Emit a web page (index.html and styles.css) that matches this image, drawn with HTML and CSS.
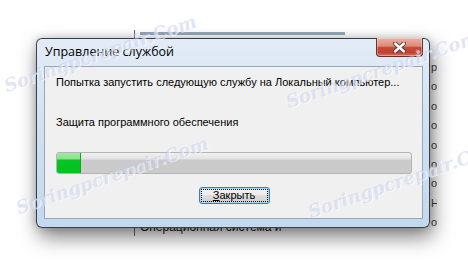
FILE: index.html
```html
<!DOCTYPE html>
<html lang="ru">
<head>
  <meta charset="UTF-8">
  <meta name="viewport" content="width=device-width, initial-scale=1.0">
  <title>Управление службой</title>
  <link rel="stylesheet" href="styles.css">
</head>
<body>
  <div class="desk">
    <!-- окно списка служб за диалогом -->
    <div class="app">
      <div class="app-main">
        <div class="app-head"></div>
        <div class="app-bottom">Операционная система и</div>
      </div>
      <div class="app-edge">
        <div>р</div>
        <div>о</div>
        <div>о</div>
        <div>о</div>
        <div>о</div>
        <div>о</div>
        <div>о</div>
        <div>Н</div>
        <div>о</div>
      </div>
    </div>

    <div class="dialog">
      <div class="titlebar">
        <span class="title">Управление службой</span>
        <button class="close" aria-label="Закрыть">
          <svg width="13" height="11" viewBox="0 0 13 11">
            <path d="M2 1.5 L11 9.5 M11 1.5 L2 9.5" stroke="#4b3431" stroke-width="4.2" stroke-linecap="round"/>
            <path d="M2 1.5 L11 9.5 M11 1.5 L2 9.5" stroke="#fff" stroke-width="2.4" stroke-linecap="round"/>
          </svg>
        </button>
      </div>
      <div class="client">
        <p class="msg">Попытка запустить следующую службу на Локальный компьютер...</p>
        <p class="service">Защита программного обеспечения</p>
        <div class="progress">
          <div class="progress-fill" style="width: 24px"></div>
        </div>
        <div class="actions">
          <button class="btn"><span class="btn-focus"><u>З</u>акрыть</span></button>
        </div>
      </div>
    </div>

    <!-- водяные знаки -->
    <span class="wm wm-1">Soringpcrepair.Com</span>
    <span class="wm wm-2">Soringpcrepair.Com</span>
    <span class="wm wm-3">Soringpcrepair.Com</span>
    <span class="wm wm-4">Soringpcrepair.Com</span>
  </div>
</body>
</html>
```

FILE: styles.css
```css
    body {
      margin: 0;
      padding: 0;
      background-color: #fff;
      font-family: "Liberation Sans", Arial, sans-serif;
      font-size: 11px;
      color: #000;
    }
    .desk {
      position: relative;
      width: 468px;
      height: 265px;
      overflow: hidden;
      background-color: #fff;
    }

    /* окно за диалогом */
    .app {
      position: absolute;
      left: 134px;
      top: 30px;
      width: 302px;
      height: 206px;
      display: flex;
      overflow: hidden;
      border-left: 1px solid #6a6a6a;
      background-color: #fff;
    }
    .app-main {
      flex: 1;
      display: flex;
      flex-direction: column;
      justify-content: space-between;
      padding-left: 5px;
    }
    .app-head {
      height: 3px;
      width: 205px;
      margin-top: 2px;
      background-color: #98a9bd;
    }
    .app-bottom {
      margin-bottom: 3px;
      font-size: 12px;
      line-height: 12px;
      color: #1a1a1a;
    }
    .app-edge {
      width: 6px;
      padding-top: 28px;
      font-size: 11px;
      color: #4a4040;
      line-height: 19.4px;
    }

    /* диалог */
    .dialog {
      position: absolute;
      left: 36px;
      top: 38px;
      width: 394px;
      height: 190px;
      box-sizing: border-box;
      display: flex;
      flex-direction: column;
      padding: 0 6px 8px 7px;
      border: 1px solid rgba(35, 45, 60, 0.9);
      border-radius: 6px;
      background: linear-gradient(to bottom, #e3ecf6 0%, #d3e2f2 40%, #c3d8ee 100%);
      box-shadow: 3px 9px 20px rgba(0, 0, 0, 0.5), 0 0 8px rgba(0, 0, 0, 0.18);
    }
    .titlebar {
      height: 27px;
      display: flex;
      align-items: center;
      justify-content: space-between;
    }
    .title {
      padding-left: 1px;
      padding-bottom: 2px;
      font-family: "Open Sans", sans-serif;
      font-size: 12.5px;
    }
    .close {
      align-self: flex-start;
      margin-top: -1px;
      width: 47px;
      height: 19px;
      padding: 0;
      display: flex;
      align-items: center;
      justify-content: center;
      border: 1px solid #6b2f26;
      border-top: none;
      border-radius: 0 0 4px 4px;
      background: linear-gradient(to bottom, #eab0a3 0%, #dd8b7a 45%, #c84c39 52%, #c0412f 80%, #d8735f 100%);
      box-shadow: inset 0 0 0 1px rgba(255, 255, 255, 0.35);
    }
    .client {
      flex: 1;
      border: 1px solid #97a6b8;
      background-color: #f0f0f0;
      padding: 8px 10px 0 11px;
    }
    .msg,
    .service {
      margin: 0;
      line-height: 15px;
      white-space: nowrap;
    }
    .service {
      margin-top: 25px;
    }
    .progress {
      margin-top: 22px;
      width: 356px;
      height: 22px;
      box-sizing: border-box;
      border: 1px solid #b4b4b4;
      border-radius: 3px;
      background: linear-gradient(to bottom, #f0f0f0 0%, #e3e3e3 30%, #cacaca 35%, #cbcbcb 100%);
      overflow: hidden;
    }
    .progress-fill {
      height: 100%;
      background: linear-gradient(to bottom, #a4e8a4 0%, #8ce08c 30%, #07c525 35%, #03c01e 100%);
      box-shadow: inset -1px 0 0 #08a81c;
    }
    .actions {
      display: flex;
      justify-content: center;
      margin-top: 13px;
    }
    .btn {
      width: 71px;
      height: 17px;
      padding: 1px;
      border: 1px solid #3c7fb1;
      border-radius: 3px;
      background: linear-gradient(to bottom, #f2f2f2 0%, #ebebeb 45%, #dddddd 50%, #cfcfcf 100%);
      box-shadow: inset 0 0 0 1px #a9d8f3;
      font-family: "Liberation Sans", Arial, sans-serif;
      font-size: 11px;
      color: #000;
    }
    .btn-focus {
      display: flex;
      align-items: center;
      justify-content: center;
      height: 100%;
      box-sizing: border-box;
      border: 1px dotted #000;
      line-height: 11px;
    }

    /* водяные знаки */
    .wm {
      position: absolute;
      font-family: "DejaVu Serif", serif;
      font-style: italic;
      font-weight: bold;
      font-size: 18px;
      line-height: 20px;
      white-space: nowrap;
      color: rgba(190, 200, 232, 0.45);
      text-shadow: 1px 1px 0 rgba(255, 255, 255, 0.6);
      transform: rotate(-19deg);
      transform-origin: 0 100%;
      pointer-events: none;
    }
    .wm-1 {
      left: 8px;
      top: 76px;
    }
    .wm-2 {
      left: 20px;
      top: 198px;
    }
    .wm-3 {
      left: 290px;
      top: 92px;
    }
    .wm-4 {
      left: 312px;
      top: 202px;
    }
```
